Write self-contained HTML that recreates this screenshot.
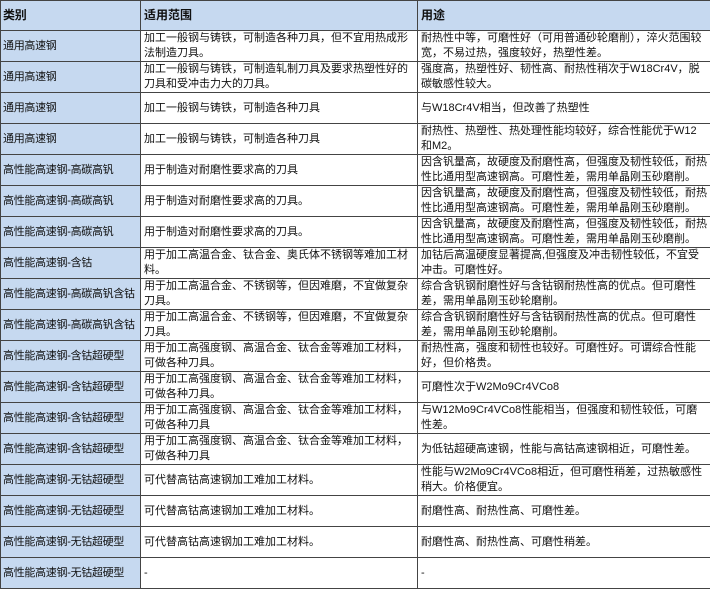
<!DOCTYPE html>
<html><head><meta charset="utf-8"><style>
body{margin:0;background:#fff;}
table{border-collapse:collapse;table-layout:fixed;width:710px;font-family:"Liberation Sans","Noto Sans CJK SC",sans-serif;font-size:11px;color:#111;}
td{border:1px solid #444;padding:0 3px;height:30px;line-height:15px;vertical-align:middle;overflow:hidden;}
td:first-child{background:#c6d9f0;white-space:nowrap;padding:0 1px 0 2px;letter-spacing:-0.3px;}
tr.h td{background:#c6d9f0;font-weight:bold;height:29px;font-size:12px;}
</style></head><body>
<table>
<colgroup><col style="width:140px"><col style="width:277px"><col style="width:293px"></colgroup>
<tr class="h"><td>类别</td><td>适用范围</td><td>用途</td></tr>
<tr><td>通用高速钢</td><td>加工一般钢与铸铁，可制造各种刀具，但不宜用热成形法制造刀具。</td><td>耐热性中等，可磨性好（可用普通砂轮磨削），淬火范围较宽，不易过热，强度较好，热塑性差。</td></tr>
<tr><td>通用高速钢</td><td>加工一般钢与铸铁，可制造轧制刀具及要求热塑性好的刀具和受冲击力大的刀具。</td><td>强度高，热塑性好、韧性高、耐热性稍次于W18Cr4V，脱碳敏感性较大。</td></tr>
<tr><td>通用高速钢</td><td>加工一般钢与铸铁，可制造各种刀具</td><td>与W18Cr4V相当，但改善了热塑性</td></tr>
<tr><td>通用高速钢</td><td>加工一般钢与铸铁，可制造各种刀具</td><td>耐热性、热塑性、热处理性能均较好，综合性能优于W12和M2。</td></tr>
<tr><td>高性能高速钢-高碳高钒</td><td>用于制造对耐磨性要求高的刀具</td><td>因含钒量高，故硬度及耐磨性高，但强度及韧性较低，耐热性比通用型高速钢高。可磨性差，需用单晶刚玉砂磨削。</td></tr>
<tr><td>高性能高速钢-高碳高钒</td><td>用于制造对耐磨性要求高的刀具。</td><td>因含钒量高，故硬度及耐磨性高，但强度及韧性较低，耐热性比通用型高速钢高。可磨性差，需用单晶刚玉砂磨削。</td></tr>
<tr><td>高性能高速钢-高碳高钒</td><td>用于制造对耐磨性要求高的刀具。</td><td>因含钒量高，故硬度及耐磨性高，但强度及韧性较低，耐热性比通用型高速钢高。可磨性差，需用单晶刚玉砂磨削。</td></tr>
<tr><td>高性能高速钢-含钴</td><td>用于加工高温合金、钛合金、奥氏体不锈钢等难加工材料。</td><td>加钴后高温硬度显著提高,但强度及冲击韧性较低，不宜受冲击。可磨性好。</td></tr>
<tr><td>高性能高速钢-高碳高钒含钴</td><td>用于加工高温合金、不锈钢等，但因难磨，不宜做复杂刀具。</td><td>综合含钒钢耐磨性好与含钴钢耐热性高的优点。但可磨性差，需用单晶刚玉砂轮磨削。</td></tr>
<tr><td>高性能高速钢-高碳高钒含钴</td><td>用于加工高温合金、不锈钢等，但因难磨，不宜做复杂刀具。</td><td>综合含钒钢耐磨性好与含钴钢耐热性高的优点。但可磨性差，需用单晶刚玉砂轮磨削。</td></tr>
<tr><td>高性能高速钢-含钴超硬型</td><td>用于加工高强度钢、高温合金、钛合金等难加工材料，可做各种刀具。</td><td>耐热性高，强度和韧性也较好。可磨性好。可谓综合性能好，但价格贵。</td></tr>
<tr><td>高性能高速钢-含钴超硬型</td><td>用于加工高强度钢、高温合金、钛合金等难加工材料，可做各种刀具。</td><td>可磨性次于W2Mo9Cr4VCo8</td></tr>
<tr><td>高性能高速钢-含钴超硬型</td><td>用于加工高强度钢、高温合金、钛合金等难加工材料，可做各种刀具</td><td>与W12Mo9Cr4VCo8性能相当，但强度和韧性较低，可磨性差。</td></tr>
<tr><td>高性能高速钢-含钴超硬型</td><td>用于加工高强度钢、高温合金、钛合金等难加工材料，可做各种刀具</td><td>为低钴超硬高速钢，性能与高钴高速钢相近，可磨性差。</td></tr>
<tr><td>高性能高速钢-无钴超硬型</td><td>可代替高钴高速钢加工难加工材料。</td><td>性能与W2Mo9Cr4VCo8相近，但可磨性稍差，过热敏感性稍大。价格便宜。</td></tr>
<tr><td>高性能高速钢-无钴超硬型</td><td>可代替高钴高速钢加工难加工材料。</td><td>耐磨性高、耐热性高、可磨性差。</td></tr>
<tr><td>高性能高速钢-无钴超硬型</td><td>可代替高钴高速钢加工难加工材料。</td><td>耐磨性高、耐热性高、可磨性稍差。</td></tr>
<tr><td>高性能高速钢-无钴超硬型</td><td>-</td><td>-</td></tr>
</table>
</body></html>
